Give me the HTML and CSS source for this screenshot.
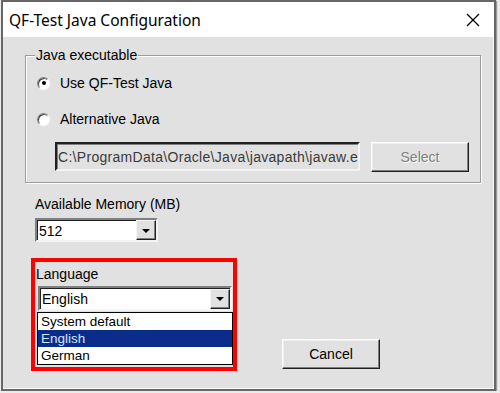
FILE: index.html
```html
<!DOCTYPE html>
<html lang="en">
<head>
    <meta charset="UTF-8">
    <meta name="viewport" content="width=device-width, initial-scale=1.0">
    <title>QF-Test Java Configuration</title>
    <link rel="stylesheet" href="styles.css">
</head>
<body>
    <div class="window">
        <div class="titlebar">
            <span class="title">QF-Test Java Configuration</span>
            <svg class="close" width="14" height="14" viewBox="0 0 14 14">
                <path d="M1 1 L13 13 M13 1 L1 13" stroke="#000" stroke-width="1.3" fill="none"/>
            </svg>
        </div>

        <div class="content">
            <fieldset class="group">
                <legend>Java executable</legend>
                <div class="radio-row first">
                    <span class="radio checked"></span>
                    <span>Use QF-Test Java</span>
                </div>
                <div class="radio-row">
                    <span class="radio"></span>
                    <span>Alternative Java</span>
                </div>
                <div class="path-row">
                    <div class="field">C:\ProgramData\Oracle\Java\javapath\javaw.exe</div>
                    <button class="btn disabled">Select</button>
                </div>
            </fieldset>

            <div class="memory">
                <div class="label">Available Memory (MB)</div>
                <div class="combo memory-combo">
                    <span class="combo-value">512</span>
                    <span class="combo-arrow"></span>
                </div>
            </div>

            <div class="bottom-row">
                <div class="highlight">
                    <div class="label">Language</div>
                    <div class="combo language-combo">
                        <span class="combo-value">English</span>
                        <span class="combo-arrow"></span>
                    </div>
                    <ul class="dropdown">
                        <li>System default</li>
                        <li class="selected">English</li>
                        <li>German</li>
                    </ul>
                </div>
                <button class="btn cancel">Cancel</button>
            </div>
        </div>
    </div>
</body>
</html>
```

FILE: styles.css
```css
:root {
    --face: #e1e1e1;
    --frame: #676767;
    --shadow: #808080;
    --dark: #404040;
    --light: #ffffff;
    --select-blue: #0a2d8c;
    --ui-font: 'Liberation Sans', Arial, sans-serif;
}

* {
    margin: 0;
    padding: 0;
    box-sizing: border-box;
}

body {
    background-color: #ececec;
    font-family: var(--ui-font);
    font-size: 14px;
    line-height: 16px;
    color: #000;
}

.window {
    margin-left: 1px;
    width: 495px;
    height: 391px;
    border: 2px solid var(--frame);
    background: var(--face);
    box-shadow: inset -1px -1px 0 #f8f8f8, 1px 1px 1px rgba(0, 0, 0, 0.35);
}

.titlebar {
    height: 35px;
    background: #fff;
    display: flex;
    align-items: center;
    justify-content: space-between;
    padding: 0 14px 0 6px;
}

.title {
    font-family: 'Noto Sans', 'Open Sans', sans-serif;
    font-size: 15.5px;
    color: #000;
}

.close {
    display: block;
}

/* group box */

.group {
    margin: 10px 0 0 22px;
    width: 451px;
    border: 1px solid #9c9c9c;
    box-shadow: inset 1px 1px 0 var(--light), 1px 1px 0 var(--light);
    padding: 0 11px 10px 11px;
}

.group legend {
    margin-left: -2px;
    padding: 0 1px;
    background: var(--face);
    position: relative;
}

.radio-row {
    display: flex;
    align-items: center;
    gap: 10px;
    height: 20px;
    margin-top: 16px;
}

.radio-row.first {
    margin-top: 10px;
}

.radio {
    width: 13px;
    height: 13px;
    border-radius: 50%;
    border: 1px solid;
    border-color: var(--shadow) var(--light) var(--light) var(--shadow);
    box-shadow: inset 1px 1px 0 var(--dark);
    background: #fff;
    display: flex;
    align-items: center;
    justify-content: center;
}

.radio.checked::after {
    content: '';
    width: 4px;
    height: 4px;
    border-radius: 50%;
    background: #000;
}

.path-row {
    display: flex;
    align-items: flex-start;
    margin-top: 13px;
}

.field {
    margin-left: 18px;
    width: 305px;
    height: 29px;
    border: 2px solid;
    border-color: #202020 #f4f4f4 #f4f4f4 #202020;
    box-shadow: inset 1px 1px 0 var(--shadow);
    background: var(--face);
    color: #3a3a3a;
    padding: 5px 0 0 1px;
    letter-spacing: 0.3px;
    white-space: nowrap;
    overflow: hidden;
}

.btn {
    font-family: var(--ui-font);
    font-size: 14px;
    background: var(--face);
    border: 1px solid;
    border-color: var(--light) #202020 #202020 var(--light);
    box-shadow: inset -1px -1px 0 var(--shadow), inset 1px 1px 0 #f0f0f0;
    width: 98px;
    height: 30px;
    color: #000;
}

.btn.disabled {
    margin-left: 11px;
    color: var(--shadow);
    text-shadow: 1px 1px 0 #fafafa;
}

/* combos */

.memory {
    margin: 13px 0 0 32px;
}

.label {
    height: 16px;
}

.combo {
    display: flex;
    align-items: center;
    background: #fff;
    border: 2px solid;
    border-color: var(--shadow) #f4f4f4 #f4f4f4 var(--shadow);
    box-shadow: inset 1px 1px 0 #202020;
}

.combo-value {
    flex: 1;
    padding-left: 2px;
    padding-top: 1px;
}

.combo-arrow {
    width: 20px;
    height: 20px;
    background: var(--face);
    border: 1px solid;
    border-color: #f4f4f4 #202020 #202020 #f4f4f4;
    box-shadow: inset -1px -1px 0 var(--shadow);
    display: flex;
    align-items: center;
    justify-content: center;
}

.combo-arrow::after {
    content: '';
    border-left: 4px solid transparent;
    border-right: 4px solid transparent;
    border-top: 4px solid #000;
    margin-top: 1px;
}

.memory-combo {
    margin-top: 6px;
    width: 123px;
    height: 24px;
}

/* language area */

.bottom-row {
    display: flex;
    align-items: flex-end;
    margin: 16px 0 0 28px;
}

.highlight {
    width: 206px;
    border: 4px solid #ff0000;
    padding: 4px 0 2px 1px;
}

.language-combo {
    margin: 4px 0 0 2px;
    width: 194px;
    height: 25px;
}

.dropdown {
    list-style: none;
    margin: 1px 0 0 1px;
    width: 196px;
    border: 1px solid #000;
    background: #fff;
}

.dropdown li {
    height: 17px;
    line-height: 17px;
    padding-left: 3px;
    font-size: 13.5px;
}

.dropdown li.selected {
    background: var(--select-blue);
    color: #d6e4ff;
}

.btn.cancel {
    margin: 0 0 2px 45px;
}
```
